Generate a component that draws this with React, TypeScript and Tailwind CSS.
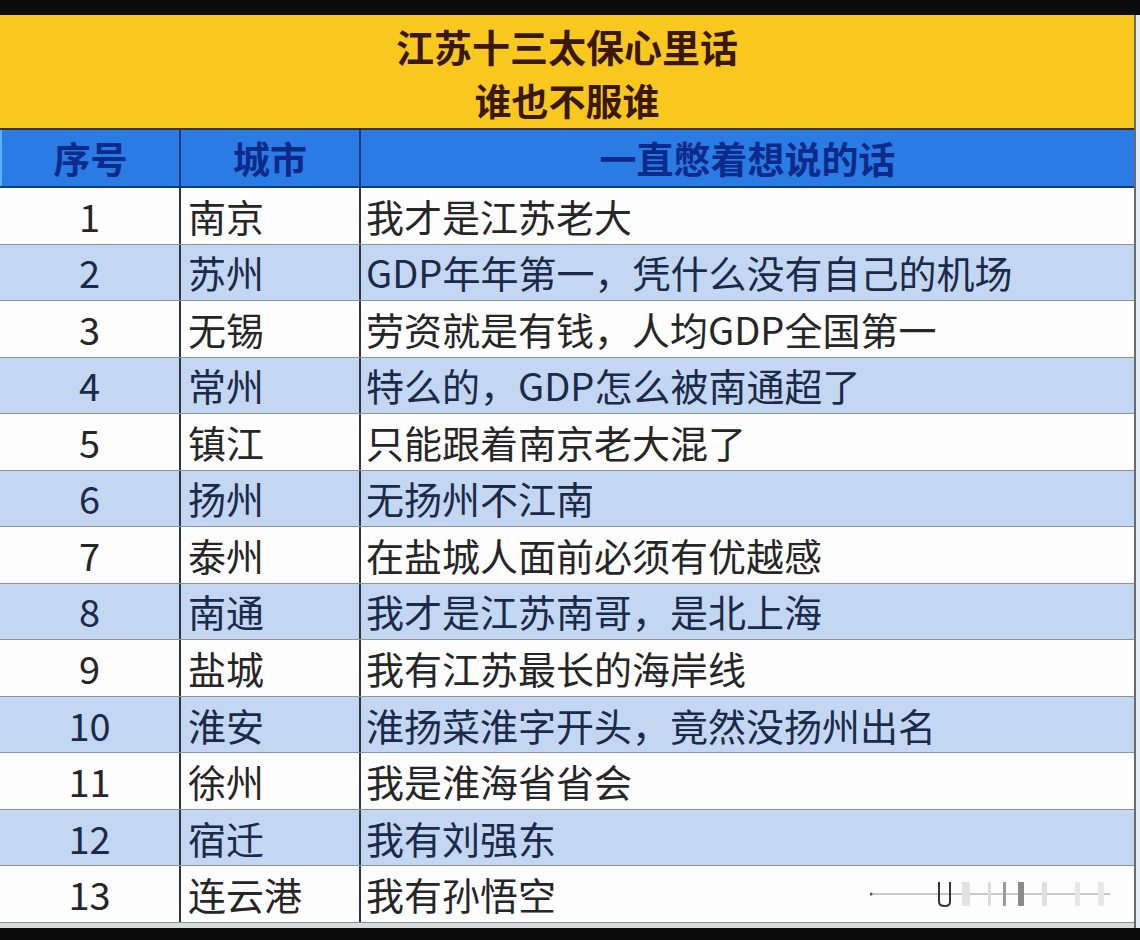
import React from "react";

const rows: [string, string, string][] = [
  ["1", "南京", "我才是江苏老大"],
  ["2", "苏州", "GDP年年第一，凭什么没有自己的机场"],
  ["3", "无锡", "劳资就是有钱，人均GDP全国第一"],
  ["4", "常州", "特么的，GDP怎么被南通超了"],
  ["5", "镇江", "只能跟着南京老大混了"],
  ["6", "扬州", "无扬州不江南"],
  ["7", "泰州", "在盐城人面前必须有优越感"],
  ["8", "南通", "我才是江苏南哥，是北上海"],
  ["9", "盐城", "我有江苏最长的海岸线"],
  ["10", "淮安", "淮扬菜淮字开头，竟然没扬州出名"],
  ["11", "徐州", "我是淮海省省会"],
  ["12", "宿迁", "我有刘强东"],
  ["13", "连云港", "我有孙悟空"],
];

const font = {
  fontFamily: '"Noto Sans CJK SC", "Noto Sans", sans-serif',
};

export default function App() {
  return (
    <div className="w-[1140px] h-[940px] bg-[#0b0b0b] flex flex-col overflow-hidden" style={font}>
      <div className="h-[15px] bg-[#0b0b0b]" />
      <div className="flex flex-1 min-h-0">
        <div className="w-[1136px] flex flex-col border-r-2 border-[#6b6b6b]">
          {/* title */}
          <div className="h-[115px] bg-[#f8c81e] border-b-2 border-[#3d3512] flex flex-col items-center justify-center pt-[2px]">
            <div className="text-[38px] leading-[54px] font-bold text-[#3a1806]">江苏十三太保心里话</div>
            <div className="text-[37px] leading-[54px] font-bold text-[#3a1806]">谁也不服谁</div>
          </div>
          {/* header */}
          <div className="h-[58px] bg-[#2a7be4] border-b-2 border-[#133a7a] flex text-[37px] font-bold text-[#0c2a8a] leading-none">
            <div className="w-[179px] flex items-center justify-center border-l-2 border-[#5fb0f0]">序号</div>
            <div className="w-[180px] flex items-center justify-center border-l-2 border-[#143a84]">城市</div>
            <div className="flex-1 flex items-center justify-center border-l-2 border-[#143a84]">一直憋着想说的话</div>
          </div>
          {/* body */}
          <div className="h-[735px] flex flex-col">
            {rows.map(([n, city, text], i) => {
              const blue = i % 2 === 1;
              return (
                <div
                  key={n}
                  className={
                    "flex-1 flex text-[38px] leading-none border-b border-[#8a929c] " +
                    (blue ? "bg-[#c3d7f3] text-[#1b2a48]" : "bg-[#fdfdfd] text-[#262626]")
                  }
                >
                  <div className="w-[179px] flex items-center justify-center">{n}</div>
                  <div className="w-[180px] flex items-center pl-[7px] border-l-2 border-[#2e3440]">{city}</div>
                  <div className="flex-1 flex items-center pl-[5px] border-l-2 border-[#2e3440] relative">
                    {text}
                    {i === 12 && (
                      <svg
                        className="absolute right-[24px] top-[14px]"
                        width="240"
                        height="30"
                        viewBox="0 0 240 30"
                      >
                        <line x1="0" y1="14" x2="240" y2="14" stroke="#c8c8c8" strokeWidth="2" />
                        <circle cx="1" cy="14" r="1.5" fill="#555" />
                        <path d="M69 2 V22 Q69 26 75 26 Q80 26 80 22 V2" stroke="#333" strokeWidth="2" fill="none" />
                        <rect x="92" y="2" width="8" height="24" fill="#e2e2e2" />
                        <rect x="118" y="2" width="3" height="24" fill="#dcdcdc" />
                        <rect x="133" y="2" width="3" height="24" fill="#9a9a9a" />
                        <rect x="148" y="2" width="6" height="24" fill="#8a8a8a" />
                        <rect x="172" y="2" width="5" height="24" fill="#e0e0e0" />
                        <rect x="205" y="2" width="5" height="24" fill="#e6e6e6" />
                        <rect x="228" y="2" width="6" height="24" fill="#e8e8e8" />
                      </svg>
                    )}
                  </div>
                </div>
              );
            })}
          </div>
          <div className="h-[5px] bg-[#d9dcdf]" />
        </div>
        <div className="flex-1 bg-[#e3ecf5]" />
      </div>
      <div className="h-[12px] bg-[#0b0b0b]" />
    </div>
  );
}
